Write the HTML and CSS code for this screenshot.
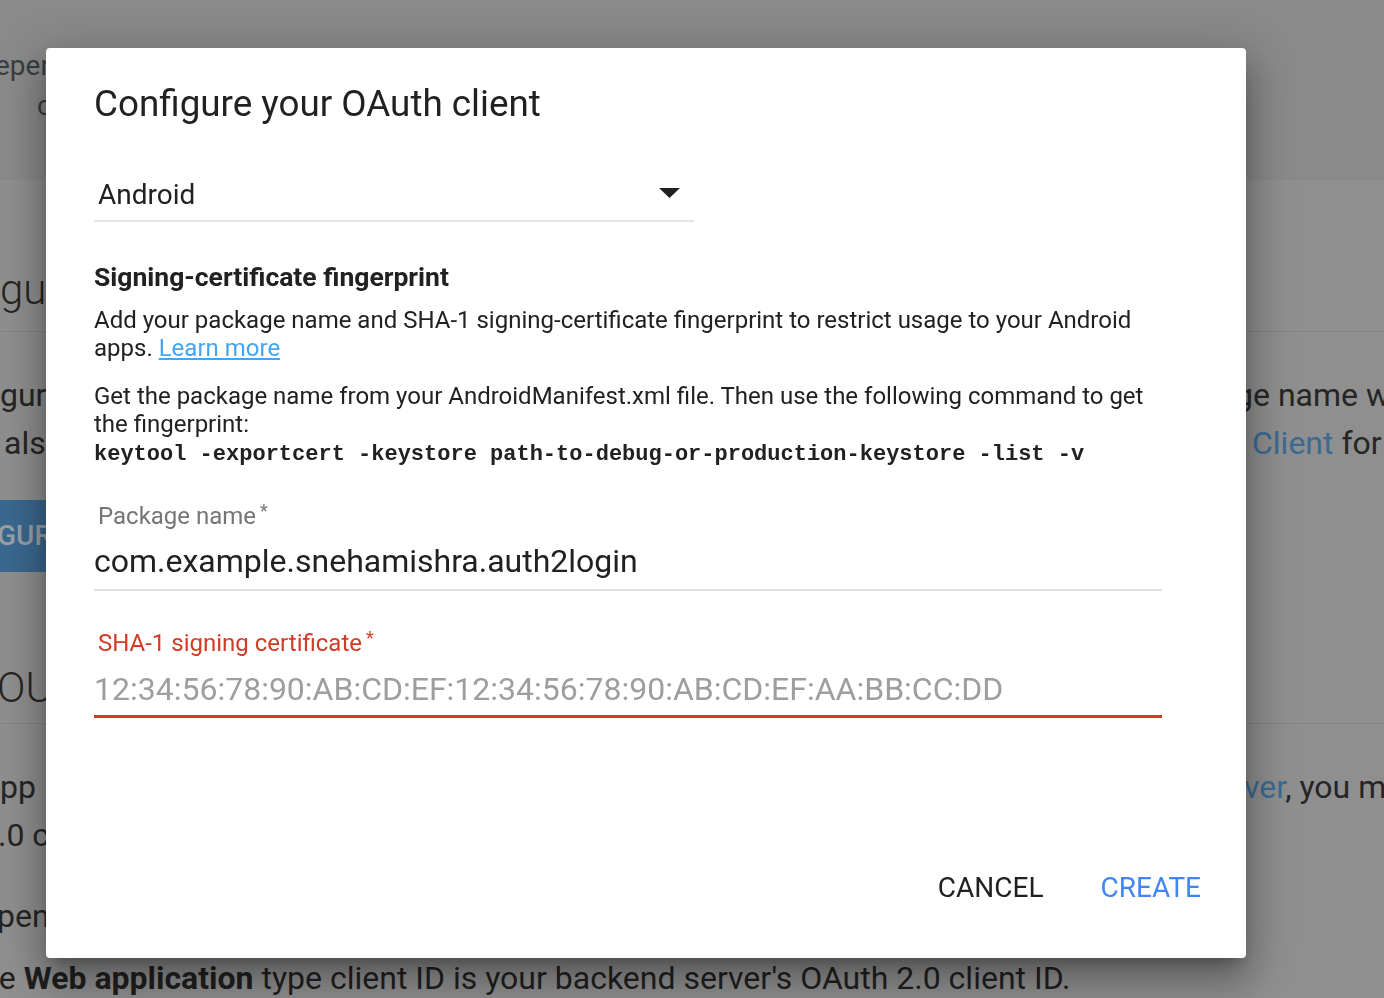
FILE: index.html
```html
<!DOCTYPE html>
<html lang="en">
<head>
<meta charset="utf-8">
<title>Configure your OAuth client</title>
<link rel="stylesheet" href="styles.css">
</head>
<body>
<div class="page" aria-hidden="true">
  <header class="bg-header">
    <div class="bg-row bg-line"><span class="bg-l ind-epen">epen</span><span></span><span></span></div>
    <div class="bg-row bg-line"><span class="bg-l ind-c">c</span><span></span><span></span></div>
  </header>
  <main class="bg-main">
    <div class="bg-row bg-h first-h"><span class="bg-l">gu</span><span></span><span></span></div>
    <div class="bg-divider div-1"></div>
    <div class="bg-para para-1">
      <div class="bg-row"><span class="bg-l">gur</span><span></span><span class="bg-r ind-gname">ge name with</span></div>
      <div class="bg-row"><span class="bg-l ind-als">als</span><span></span><span class="bg-r ind-client"><span class="bg-link">Client</span> for</span></div>
    </div>
    <div class="bg-row bg-btn-row"><span class="bg-btn">GUR</span><span></span><span></span></div>
    <div class="bg-row bg-h second-h"><span class="bg-l ind-ou">OU</span><span></span><span></span></div>
    <div class="bg-divider div-2"></div>
    <div class="bg-para para-2">
      <div class="bg-row"><span class="bg-l">pp</span><span></span><span class="bg-r ind-ver"><span class="bg-link">ver</span>, you m</span></div>
      <div class="bg-row"><span class="bg-l ind-dot">.0 c</span><span></span><span></span></div>
    </div>
    <div class="bg-para para-3">
      <div class="bg-row"><span class="bg-l ind-pen">pen</span><span></span><span></span></div>
    </div>
    <p class="bg-bottom">The <b>Web application</b> type client ID is your backend server's OAuth 2.0 client ID.</p>
  </main>
</div>

<div class="dialog" role="dialog" aria-labelledby="dlg-title">
  <h2 class="dialog-title" id="dlg-title">Configure your OAuth client</h2>
  <div class="select">
    <span class="select-value">Android</span>
    <svg class="select-arrow" viewBox="0 0 21 10" aria-hidden="true"><path d="M0 0H21L10.5 10Z" fill="#212121"/></svg>
  </div>
  <div class="dialog-body">
    <h3 class="section-title">Signing-certificate fingerprint</h3>
    <p class="desc">Add your package name and SHA-1 signing-certificate fingerprint to restrict usage to your Android apps. <a class="link" href="#">Learn more</a></p>
    <p class="desc desc-2">Get the package name from your AndroidManifest.xml file. Then use the following command to get the fingerprint:<br><code class="code">keytool -exportcert -keystore path-to-debug-or-production-keystore -list -v</code></p>
    <div class="field">
      <div class="field-label">Package name<span class="req">*</span></div>
      <div class="field-input">com.example.snehamishra.auth2login</div>
    </div>
    <div class="field field--error">
      <div class="field-label">SHA-1 signing certificate<span class="req">*</span></div>
      <div class="field-input">12:34:56:78:90:AB:CD:EF:12:34:56:78:90:AB:CD:EF:AA:BB:CC:DD</div>
    </div>
  </div>
  <div class="actions">
    <button class="btn btn-cancel" type="button">CANCEL</button>
    <button class="btn btn-create" type="button">CREATE</button>
  </div>
</div>
</body>
</html>
```

FILE: styles.css
```css
* { box-sizing: border-box; }

html, body {
  margin: 0;
  height: 100%;
}

body {
  background: #8f8f8f;
  font-family: Roboto, "Liberation Sans", sans-serif;
  color: #252525;
  overflow: hidden;
}

/* ---------- background page (already dimmed) ---------- */
.page {
  width: 1384px;
  height: 998px;
  overflow: hidden;
}

.bg-header {
  height: 180px;
  background: #8a8a8a;
  padding-top: 46px;
}

.bg-row {
  display: grid;
  grid-template-columns: 46px 1200px 138px;
}

.bg-row > span {
  display: block;
  white-space: nowrap;
  overflow: hidden;
}

.bg-line {
  font-size: 28px;
  line-height: 40px;
  color: #3a3d40;
}

.ind-epen { text-indent: -5px; }
.ind-c { text-indent: 37px; overflow: visible !important; }

.bg-h {
  font-size: 42px;
  font-weight: 300;
  line-height: 56px;
}

.first-h { margin-top: 82px; }
.second-h { margin-top: 88px; }

.bg-divider {
  height: 1px;
  background: #828282;
}

.div-1 { margin-top: 13px; }
.div-2 { margin-top: 7px; }

.bg-para {
  font-size: 32px;
  line-height: 48px;
}

.para-1 { margin-top: 39px; }
.para-2 { margin-top: 39px; }
.para-3 { margin-top: 33px; }

.ind-als { text-indent: 4px; }
.ind-ou { text-indent: -3px; }
.ind-dot { text-indent: -2px; }
.ind-pen { text-indent: -3px; }
.ind-gname { text-indent: -11px; }
.ind-client { text-indent: 6px; }
.ind-ver { text-indent: -2px; }

.bg-link { color: #3b6a92; }

.bg-btn-row { margin-top: 33px; }

.bg-btn {
  height: 72px;
  background: #3a6890;
  color: #9aa0a6;
  font-size: 28px;
  font-weight: 500;
  line-height: 72px;
  text-indent: -3px;
}

.bg-bottom {
  margin: 14px 0 0 -38px;
  font-size: 32px;
  line-height: 48px;
  white-space: nowrap;
  color: #1f1f1f;
}

.bg-bottom b { font-weight: 700; }

/* ---------- dialog ---------- */
.dialog {
  position: fixed;
  left: 46px;
  top: 48px;
  width: 1200px;
  height: 910px;
  background: #fff;
  border-radius: 4px;
  box-shadow:
    0 11px 15px -7px rgba(0, 0, 0, 0.28),
    0 24px 38px 3px rgba(0, 0, 0, 0.2),
    0 9px 46px 8px rgba(0, 0, 0, 0.18);
  padding: 35px 48px 42px;
  display: flex;
  flex-direction: column;
  color: #212121;
}

.dialog-title {
  margin: 0;
  font-size: 36.8px;
  font-weight: 400;
  line-height: 42px;
}

.select {
  margin-top: 44px;
  width: 600px;
  display: flex;
  align-items: center;
  justify-content: space-between;
  padding: 10px 14px 9px 4px;
  border-bottom: 2px solid #e4e4e4;
  font-size: 28px;
  line-height: 32px;
}

.select-arrow {
  width: 21px;
  height: 10px;
  margin-top: -4px;
}

.dialog-body {
  max-width: 1068px;
}

.section-title {
  margin: 39px 0 0;
  font-size: 26.5px;
  font-weight: 700;
  line-height: 32px;
}

.desc {
  margin: 13px 0 0;
  font-size: 24px;
  line-height: 28px;
}

.desc-2 { margin-top: 20px; }

.link {
  color: #42a5f5;
  text-decoration: underline;
}

.code {
  font-family: "Liberation Mono", "DejaVu Sans Mono", monospace;
  font-weight: 700;
  font-size: 22px;
}

.field { margin-top: 33px; }
.field + .field { margin-top: 38px; }

.field-label {
  padding-left: 4px;
  font-size: 24px;
  line-height: 28px;
  color: #757575;
}

.req {
  font-size: 18px;
  line-height: 18px;
  vertical-align: top;
  margin-left: 4px;
}

.field-input {
  margin-top: 11px;
  font-size: 32px;
  line-height: 40px;
  padding-bottom: 8px;
  border-bottom: 2px solid #e0e0e0;
  white-space: nowrap;
}

.field--error .field-label { color: #d23c26; }

.field--error .field-input {
  margin-top: 12px;
  color: #9e9e9e;
  padding-bottom: 6px;
  border-bottom: 3px solid #d23c26;
}

.actions {
  margin: auto -19px 0 0;
  display: flex;
  justify-content: flex-end;
  gap: 25px;
}

.btn {
  border: 0;
  background: none;
  padding: 8px 16px;
  font-family: Roboto, "Liberation Sans", sans-serif;
  font-size: 28px;
  line-height: 40px;
  cursor: pointer;
}

.btn-cancel { color: #212121; }
.btn-create { color: #4285f4; }
```
